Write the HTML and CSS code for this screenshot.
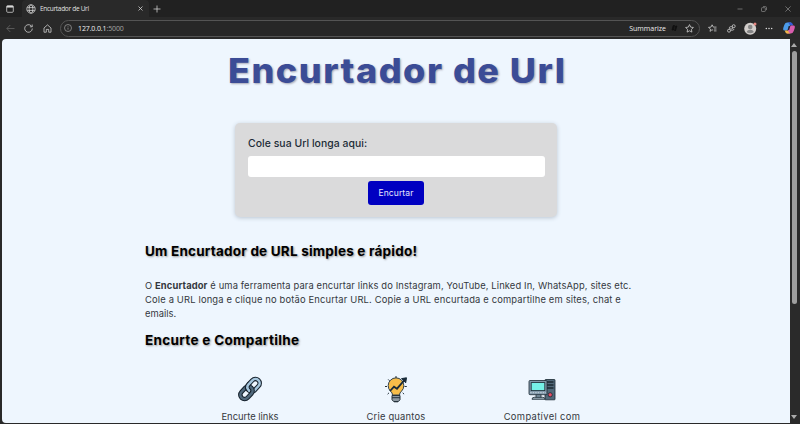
FILE: index.html
```html
<!DOCTYPE html>
<html lang="pt-BR">
<head>
<meta charset="utf-8">
<title>Encurtador de Url</title>
<link rel="stylesheet" href="styles.css">
</head>
<body>
<header class="tabs">
  <svg class="workspace" viewBox="0 0 8 8"><rect x=".7" y=".7" width="6.6" height="6.6" rx="1"/><path d="M.7 1.7h6.6" stroke-width="1.7"/></svg>
  <div class="tab">
    <svg class="globe" viewBox="0 0 10 10"><circle cx="5" cy="5" r="4.2"/><ellipse cx="5" cy="5" rx="1.9" ry="4.2"/><path d="M1.2 3.6h7.6M1.2 6.4h7.6"/></svg>
    <span class="tab-title">Encurtador de Url</span>
    <svg class="close" viewBox="0 0 5 5"><path d="M.5.5l4 4M4.5.5l-4 4"/></svg>
  </div>
  <svg class="plus" viewBox="0 0 8 8"><path d="M4 .5v7M.5 4h7"/></svg>
  <div class="window-controls">
    <svg viewBox="0 0 6 6"><path d="M.5 3h5"/></svg>
    <svg viewBox="0 0 6 6"><rect x=".5" y="1.7" width="3.8" height="3.8" rx=".6"/><path d="M2 .6h2.5q1 0 1 1v2.5"/></svg>
    <svg viewBox="0 0 6 6"><path d="M.4.4l5.2 5.2M5.6.4L.4 5.6"/></svg>
  </div>
</header>
<nav class="toolbar">
  <svg class="back" viewBox="0 0 9 9"><path d="M8.5 4.5H.8M4.3 1L.8 4.5 4.3 8"/></svg>
  <svg class="reload" viewBox="0 0 9 9"><path d="M8.3 4.5a3.8 3.8 0 1 1-1.2-2.8L8 2.6M8.2.5v2.3H5.9"/></svg>
  <svg class="home" viewBox="0 0 9 9"><path d="M1 4l3.5-3.1L8 4v4.2H5.7V5.4H3.3v2.8H1z"/></svg>
  <div class="address">
    <svg class="info" viewBox="0 0 8 8"><circle cx="4" cy="4" r="3.5"/><path d="M4 3.6v2M4 2.2v.6"/></svg>
    <span class="url">127.0.0.1<span class="port">:5000</span></span>
    <span class="summarize">Summarize</span>
    <svg class="mini-pilot" viewBox="0 0 8 8"><path d="M2 6L3.2 1.5h1.3L3.4 6zM4.6 6.5L5.7 2h1.2L5.6 6.5z"/></svg>
    <svg class="star" viewBox="0 0 9 9"><path d="M4.5.6l1.2 2.5 2.7.4-2 1.9.5 2.7-2.4-1.3-2.4 1.3.5-2.7-2-1.9 2.7-.4z"/></svg>
  </div>
  <svg class="favorites" viewBox="0 0 9 9"><path d="M5.2 6L3.9 5.9 2 7.4l.5-2.3-2-1.7 2.5-.3L4.1.8l1.2 2.3h3.2M6 5h2.5M6 6.9h2.5"/></svg>
  <svg class="essentials" viewBox="0 0 9 9"><circle cx="6.7" cy="2.2" r="1.5"/><rect x="2.4" y="2.7" width="3.4" height="2.2" rx="1.1"/><circle cx="2" cy="6.7" r="1.5"/><path d="M3.5 6.2h2.2q1.2 0 1.2-1.3"/></svg>
  <svg class="avatar" viewBox="0 0 13 13"><circle cx="6.2" cy="6.7" r="6" fill="#d2cecb"/><circle cx="6.2" cy="5" r="2.3" fill="#858585"/><path d="M2.7 10.3q.2-2.5 3.5-2.5t3.5 2.5q-3.5 2-7 0z" fill="#858585"/><circle cx="11" cy="1.9" r="1.5" fill="#e68680"/></svg>
  <svg class="dots" viewBox="0 0 8 3"><circle cx="1.3" cy="1.5" r=".75"/><circle cx="4" cy="1.5" r=".75"/><circle cx="6.7" cy="1.5" r=".75"/></svg>
  <svg class="copilot" viewBox="0 0 12 12"><path d="M1.3 8.5Q-.4 8.5.4 5.6L1.4 2.7Q2.2.5 4.3.5h4L5.1 7.4Q4.6 8.5 3.4 8.5z" fill="#4c9be8"/><path d="M4.3.5h3.4q1.5 0 2 1.5l.5 1.5H8q-1.3 0-1.7-1.3Q5.8.7 4.3.5z" fill="#335bd8"/><path d="M10.7 3.5q1.7 0 .9 2.9l-1 2.9q-.8 2.2-2.9 2.2h-4l3.2-6.9Q7.4 3.5 8.6 3.5z" fill="#d85cad"/><path d="M1.8 8.5H4q1.3 0 1.7 1.3.5 1.5 2 1.7H4.3q-1.5 0-2-1.5z" fill="#f0b64a"/><path d="M5.6 4h1.7L6.2 8H4.6z" fill="#252638"/></svg>
</nav>
<div class="viewport">
  <main class="page">
    <h1><span>Encurtador de Url</span></h1>
    <form class="card">
      <label for="long-url">Cole sua Url longa aqui:</label>
      <input id="long-url" type="text">
      <button type="button">Encurtar</button>
    </form>
    <section class="about">
      <h2 class="intro-title">Um Encurtador de URL simples e rápido!</h2>
      <p><span class="line-one">O <strong>Encurtador</strong> é uma ferramenta para encurtar links do Instagram, YouTube, Linked In, WhatsApp, sites etc.</span><br><span class="line-two">Cole a URL longa e clique no botão Encurtar URL. Copie a URL encurtada e compartilhe em sites, chat e</span><br>emails.</p>
      <h2 class="share-title">Encurte e Compartilhe</h2>
    </section>
    <div class="features">
      <div class="feature">
        <svg viewBox="0 0 28 28"><g transform="rotate(-47 14 14)" fill="none"><rect x="12.2" y="9.8" width="14" height="8.4" rx="4.2" stroke="#17232e" stroke-width="4.6"/><rect x="12.2" y="9.8" width="14" height="8.4" rx="4.2" stroke="#a5c5dc" stroke-width="2.5"/><rect x="1.8" y="9.8" width="14" height="8.4" rx="4.2" stroke="#17232e" stroke-width="4.6"/><rect x="1.8" y="9.8" width="14" height="8.4" rx="4.2" stroke="#51697c" stroke-width="2.5"/><path d="M12.2 14q0-4.2 4.2-4.2h2" stroke="#17232e" stroke-width="4.4"/><path d="M12.2 14.8q0-5 4.2-5h2.5" stroke="#a5c5dc" stroke-width="2.4"/></g></svg>
        <span class="f-one">Encurte links</span>
      </div>
      <div class="feature">
        <svg viewBox="0 0 28 28"><path d="M10.5 20q0-2.2-2-3.8a7.8 7.8 0 1 1 11 0q-2 1.6-2 3.8z" fill="#f7bd49" stroke="#33424c"/><path d="M10 20.5h8v4.2l-1.6 1.8h-4.8L10 24.7z" fill="#8e9aa3" stroke="#26323b"/><path d="M10 22.7h8M12 26.8h4" stroke="#26323b"/><path d="M8 16l4-4.3 3 2L22.5 5" fill="none" stroke="#172a39" stroke-width="1.8"/><path d="M19.5 3.6l5-.8-.8 5z" fill="#172a39" stroke="#172a39"/><path d="M14 1v2M6.2 4.4l1.4 1.4M3 11.5h2M5.6 19.2L7 17.8M22.5 11.5h2.3M20.7 17.8l1.4 1.4" stroke="#26323b"/></svg>
        <span class="f-two">Crie quantos</span>
      </div>
      <div class="feature">
        <svg viewBox="0 0 28 28"><g stroke="#1b2932" stroke-width=".8"><rect x="17" y="4.5" width="10" height="20.3" rx=".6" fill="#516879"/><path d="M18.5 7h7M18.5 10h7M18.5 13h7" stroke-width="1.4"/><circle cx="22.2" cy="19.8" r="2.1" fill="#e94d63"/><path d="M8 19h5v4H8z" fill="#7f96a5"/><path d="M4 24.3q0-2 2.3-2h8.4q2.3 0 2.3 2z" fill="#9caeba"/><rect x="1" y="5.5" width="18" height="14.2" rx="1" fill="#8197a8"/><rect x="3.2" y="7.6" width="13.6" height="8" fill="#76f1e7"/></g><path d="M2.2 17.7h15.6" stroke="#c9d7df" stroke-dasharray="1.5 1"/></svg>
        <span class="f-three">Compatível com</span>
      </div>
    </div>
  </main>
  <aside class="scrollbar"><i class="up"></i><i class="thumb"></i><i class="down"></i></aside>
</div>
</body>
</html>
```
FILE: styles.css
```css
* { box-sizing: border-box; }
body { margin: 0; width: 800px; height: 424px; overflow: hidden; background: #292929; font-family: Inter, "Open Sans", sans-serif; display: flex; flex-direction: column; }
svg { display: block; flex: none; overflow: visible; }
.tabs { height: 17px; flex: none; display: flex; align-items: center; background: #212121; }
.tabs svg, .toolbar > svg, .address svg { fill: none; stroke: #d8d8d8; stroke-width: .75; }
.workspace { width: 8px; margin-left: 6px; }
.tab { width: 127px; height: 17px; margin-left: 8px; padding: 0 6px 0 4px; display: flex; align-items: center; background: #292929; border-radius: 4px 4px 0 0; }
.globe { width: 10px; }
.tab-title { font: 6.5px "Open Sans", sans-serif; color: #e1e1e1; margin-left: 4px; white-space: nowrap; letter-spacing: -.3px; }
.tab .close { width: 5px; margin-left: auto; }
.plus { width: 8px; margin-left: 4px; }
.window-controls { display: flex; gap: 18px; margin-left: auto; margin-right: 9px; }
.tabs .window-controls svg { width: 6px; stroke: #858585; }
.toolbar { height: 22px; flex: none; display: flex; align-items: center; background: #292929; }
.toolbar svg { width: 9px; }
.toolbar > .back { margin-left: 6px; stroke: #686868; }
.reload { margin-left: 9px; }
.home { margin-left: 10px; }
.address { width: 640px; height: 17px; margin-left: 8px; border: 1px solid #545454; border-radius: 9px; background: #272727; display: flex; align-items: center; padding: 0 5px 0 3px; }
.address .info { width: 8px; stroke: #999; }
.url { font: 7px "Open Sans", sans-serif; color: #f1f1f1; margin-left: 6px; letter-spacing: -.12px; }
.port { color: #a5a5a5; }
.summarize { font: 7px "Open Sans", sans-serif; color: #eee; margin-left: auto; }
.address .mini-pilot { width: 8px; margin: 0 7px 0 4px; stroke: #0d0d0d; fill: #151515; }
.favorites { margin-left: 8px; }
.essentials { margin-left: 10px; }
.toolbar > .avatar { width: 13px; margin-left: 8px; stroke: none; }
.toolbar > .dots { width: 8px; margin-left: 8px; fill: #ddd; stroke: none; }
.toolbar > .copilot { width: 12px; margin-left: 10px; stroke: none; }
.viewport { width: 798px; height: 384px; margin-left: 2px; display: flex; }
.page { width: 788px; height: 384px; overflow: hidden; background: #eef6fe; border-radius: 4px 0 0 4px; }
h1 { margin: 0; height: 84px; padding-top: 10px; padding-left: 226px; color: #3b4c96; font: 800 34px/44px Inter, sans-serif; letter-spacing: 1.4px; white-space: nowrap; text-shadow: 1px 1px 2px #a5a5b4; }
h1 span { display: inline-block; transform: scaleX(1.06); transform-origin: left; }
.card { width: 322px; height: 94px; margin-left: 233px; padding: 14px 12px 0 13px; background: #dadadb; border-radius: 5px; box-shadow: 0 1px 4px #bac5d1; display: flex; flex-direction: column; }
label { font: 500 10.4px/14px Inter, sans-serif; color: #202b36; white-space: nowrap; letter-spacing: .06px; }
input { width: 297px; height: 21px; flex: none; margin-top: 5px; border: 0; border-radius: 3px; background: #fff; }
button { width: 56px; height: 24px; flex: none; margin: 4px 0 0 120px; padding: 0; border: 0; border-radius: 3px; background: #0000c1; color: #e7e5ff; font: 8.5px Inter, sans-serif; letter-spacing: .1px; }
.about { padding: 24px 0 0 143px; white-space: nowrap; color: #34383d; }
h2 { margin: 0; font: 700 13.5px/20px Inter, sans-serif; color: #000; text-shadow: 1px 1px 2px #999; }
.intro-title { letter-spacing: .21px; }
.share-title { letter-spacing: .32px; }
p { margin: 18px 0 9px; font: 9.4px/14px Inter, sans-serif; }
.line-one { letter-spacing: .12px; }
.line-two { letter-spacing: .16px; }
strong { font-weight: 700; }
.features { display: grid; grid-template-columns: repeat(3, 146px); margin: 25px 0 0 175px; }
.feature { display: flex; flex-direction: column; align-items: center; color: #34383d; font: 9.4px/14px Inter, sans-serif; white-space: nowrap; }
.feature svg { width: 28px; height: 28px; margin-bottom: 7px; }
.f-two { letter-spacing: .2px; }
.f-three { letter-spacing: .35px; }
.scrollbar { width: 10px; display: flex; flex-direction: column; align-items: center; background: #2a2a2a; padding: 4px 2px 4px 0; }
.up { border: 3px solid transparent; border-top: 0; border-bottom: 4px solid #aaa; }
.thumb { width: 5px; height: 253px; margin-top: 4px; background: #9e9e9e; border-radius: 3px; }
.down { margin-top: auto; border: 3px solid transparent; border-bottom: 0; border-top: 4px solid #aaa; }
```
